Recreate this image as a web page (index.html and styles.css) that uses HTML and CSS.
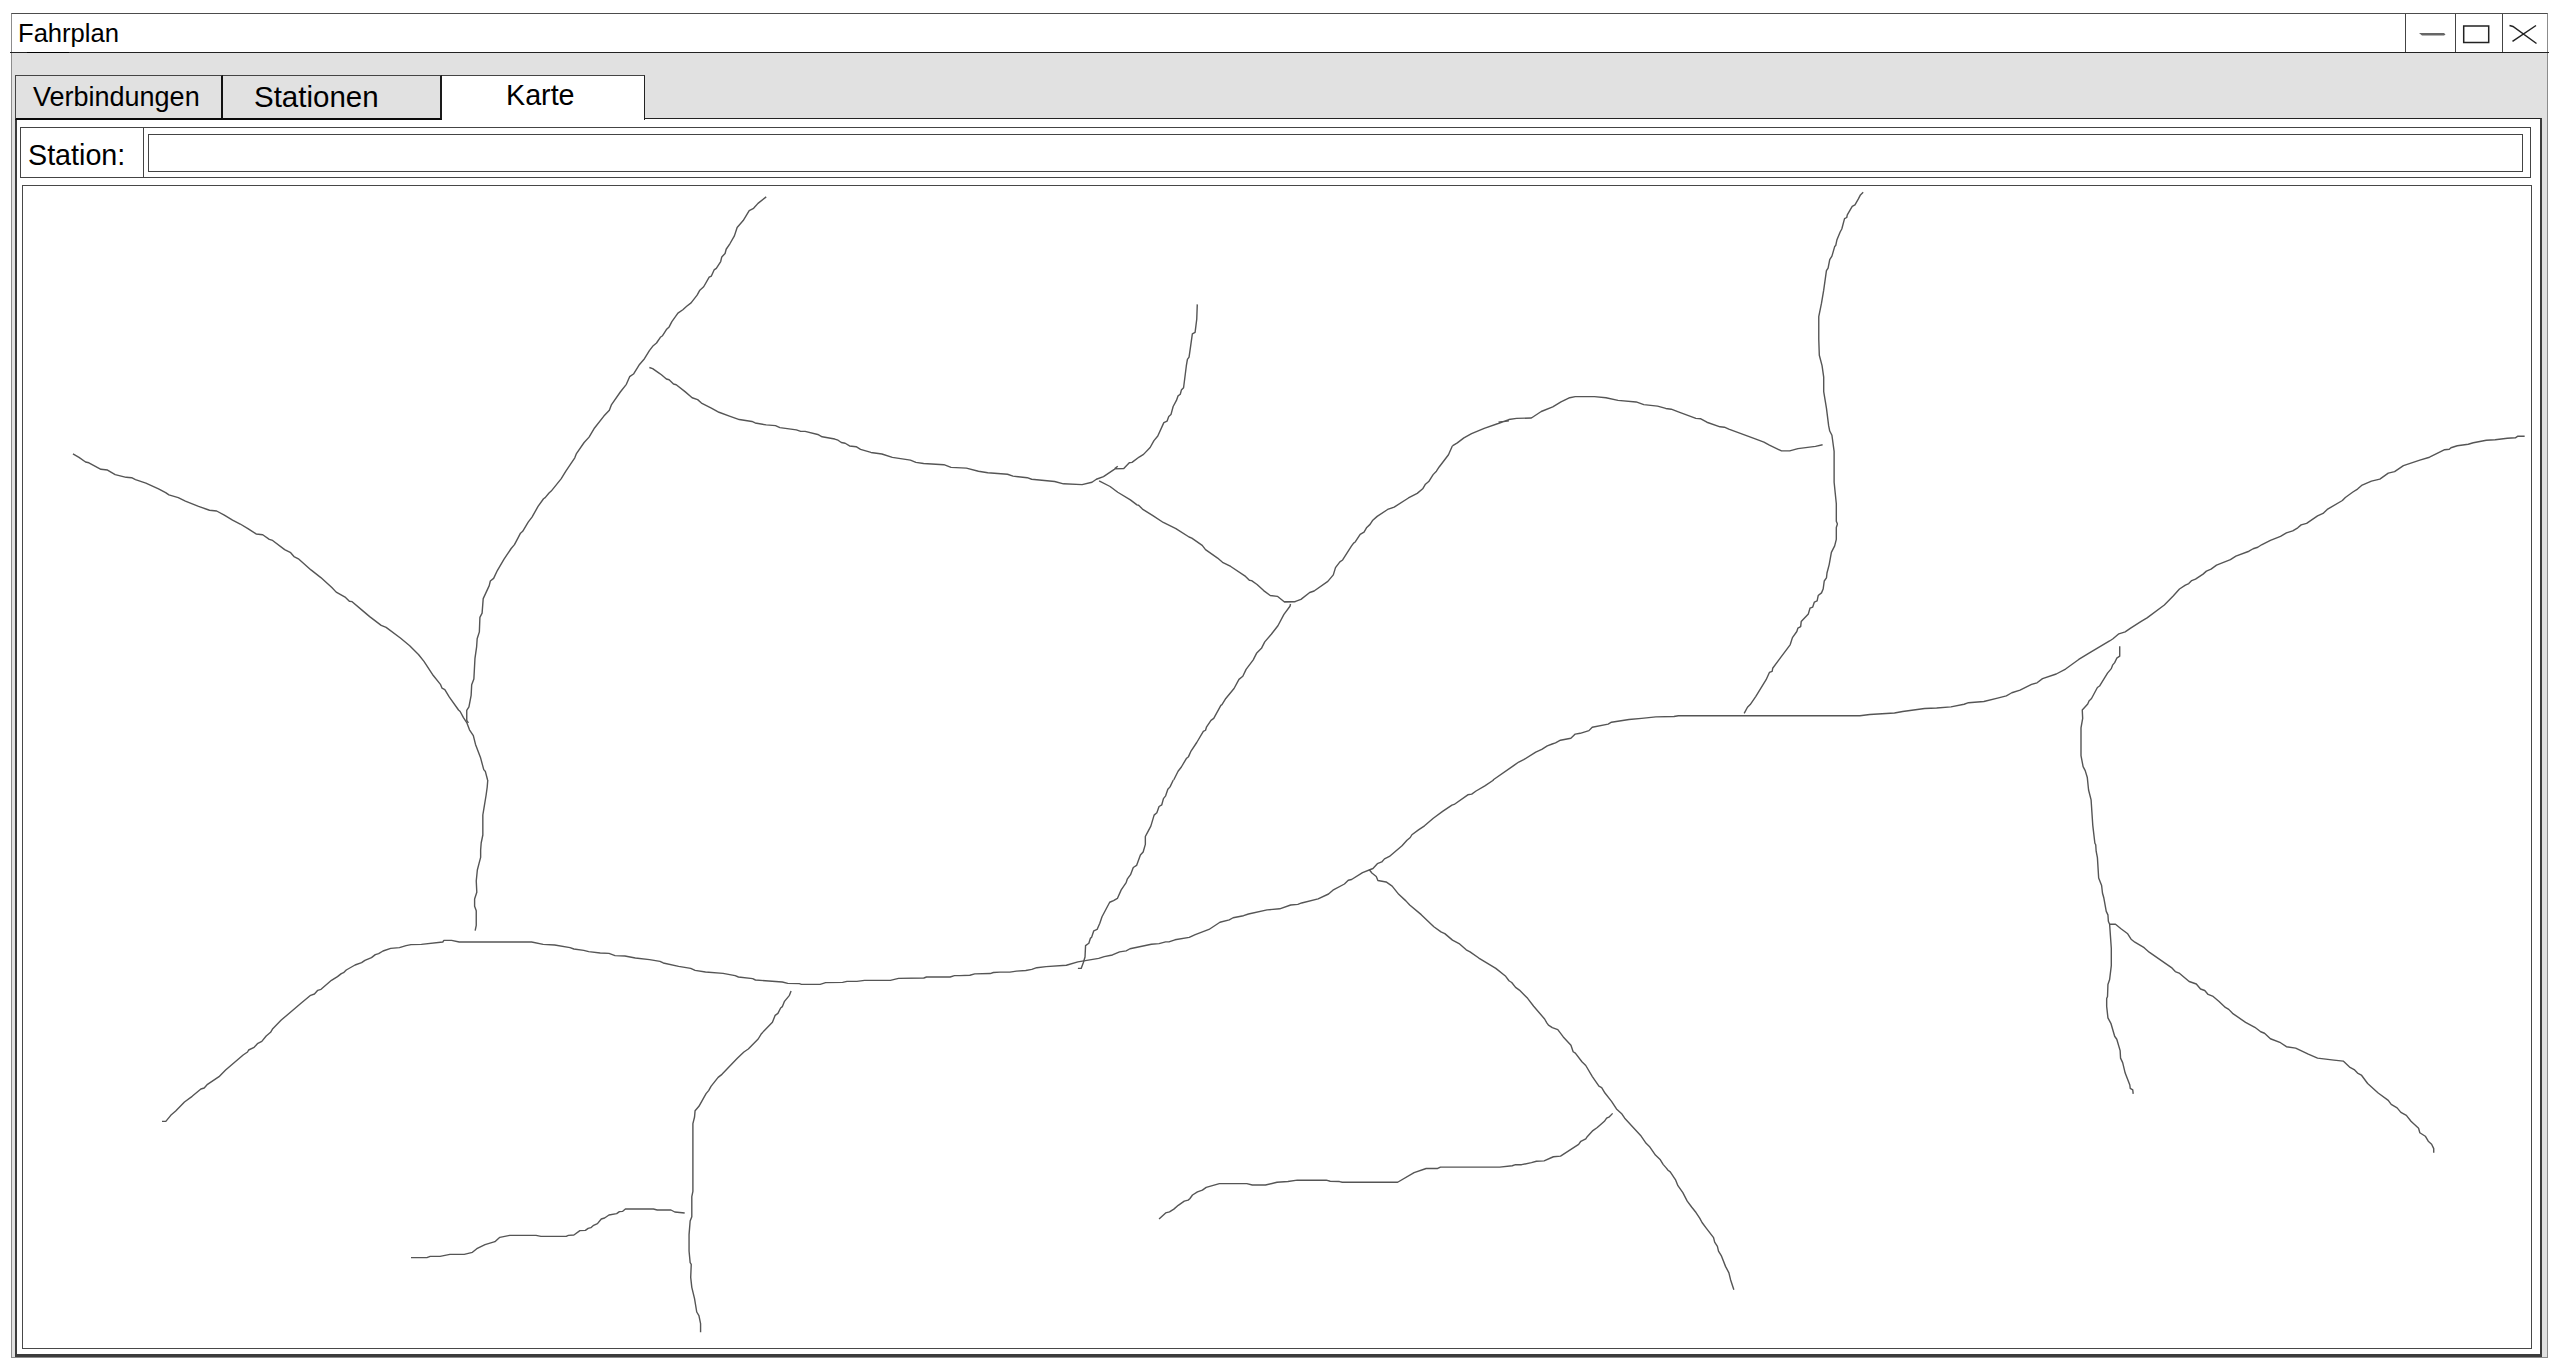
FILE: index.html
```html
<!DOCTYPE html>
<html lang="de">
<head>
<meta charset="utf-8">
<title>Fahrplan</title>
<link rel="stylesheet" href="styles.css">
</head>
<body>
<div class="window">
  <header class="titlebar">
    <h1 class="title">Fahrplan</h1>
    <button class="win-btn minimize" aria-label="Minimieren"><svg width="49" height="38"><path d="M13 19H38L39.500 20.500L38 21.500H16Z" fill="#666"/></svg></button>
    <button class="win-btn maximize" aria-label="Maximieren"><svg width="45" height="38"><rect x="7.700" y="12" width="25" height="16.500" fill="none" stroke="#222" stroke-width="1.500"/></svg></button>
    <button class="win-btn close" aria-label="Schließen"><svg width="44" height="38"><path d="M6.500 11.500L10 12.500L33.500 29.500M33 11.500L9.500 27.300" fill="none" stroke="#222" stroke-width="1.500"/></svg></button>
  </header>
  <nav class="tabs">
    <a class="tab connections">Verbindungen</a>
    <a class="tab stations">Stationen</a>
    <a class="tab map-tab active">Karte</a>
  </nav>
  <main class="panel">
    <div class="search">
      <label class="search-label" for="station">Station:</label>
      <input class="search-input" id="station" type="text">
    </div>
    <div class="map">
      <svg class="network" viewBox="23 186 2508 1162">
        <!-- north-west -->
        <g transform="translate(0 180) scale(.54847 .38265)">
          <path d="M133 716L144 725L156 737L162 739L184 756L196 758L210 770L230 777L240 778L247 783L266 792L289 807L302 817L308 823L325 830L338 839L362 853L382 863L395 865L409 876L424 889L438 899L452 911L467 925L479 927L491 939L497 942L519 966L530 974L536 984L544 990L567 1019L585 1039L605 1065L613 1077L630 1091L637 1101L642 1102L660 1124L674 1141L695 1164L704 1169L730 1197L747 1217L763 1240L773 1258L790 1295L803 1318L806 1328L811 1332L819 1351L836 1385L839 1389L845 1405L851 1418L856 1437L863 1452L867 1475L876 1509L882 1541L885 1546L889 1568"/>
          <path d="M1397 44L1382 61L1374 74L1366 80L1355 106L1344 124L1339 146L1331 166L1324 181L1322 192L1316 201L1314 213L1306 231L1302 235L1297 251L1293 254L1283 279L1276 288L1271 301L1260 321L1252 330L1245 339L1236 348L1225 370L1220 384L1215 391L1208 407L1204 411L1197 426L1191 433L1184 446L1175 467L1166 482L1155 507L1148 514L1142 534L1131 554L1115 587L1111 602L1101 617L1084 648L1074 672L1065 686L1051 715L1048 726L1032 760L1023 781L1005 813L1001 818L994 830L991 833L981 853L970 881L963 894L953 918L949 923L945 934L938 953L932 963L919 991L907 1020L900 1041L894 1048L892 1060L881 1094L879 1132L875 1143L874 1181L870 1199L869 1220L866 1250L864 1304L860 1319L859 1347L855 1377L851 1386L851 1412L854 1419"/>
        </g>
        <!-- north -->
        <g transform="translate(600 180) scale(.54847 .38265)">
          <path d="M90 490L96 493L107 504L112 509L121 520L126 522L134 533L139 535L155 553L168 569L178 574L185 583L203 596L217 607L236 617L254 626L277 631L283 635L303 640L320 642L328 647L358 653L366 657L374 657L397 665L405 671L428 677L434 680L440 686L447 688L455 695L467 697L475 704L494 712L514 716L533 725L566 732L576 738L590 741L627 744L640 751L668 753L690 761L707 765L743 769L753 774L779 778L787 782L829 788L845 794L879 796L897 790L905 782L918 775L939 755L955 754L965 739L970 738L983 724L991 717L1003 699L1010 681L1017 669L1028 634L1034 630L1037 618L1041 613L1045 592L1051 576L1054 564L1058 560L1060 549L1064 543L1069 486L1071 469L1074 463L1077 433L1080 402L1085 398L1088 364L1089 325M938 755L944 748"/>
          <path d="M910 786L930 801L944 816L967 836L979 849L982 850L989 860L1008 877L1027 895L1050 911L1074 933L1079 936L1098 955L1104 966L1126 988L1135 999L1150 1010L1177 1036L1184 1046L1188 1047L1198 1057L1210 1073L1222 1086L1235 1088L1248 1103L1267 1102L1278 1096L1294 1078L1302 1074L1327 1049L1337 1032L1341 1013L1349 998L1354 993L1370 957L1374 949L1377 946L1386 926L1393 920L1398 908L1404 900L1409 889L1417 879L1436 861L1448 855L1474 831L1490 819L1500 807L1505 795L1511 788L1519 770L1525 761L1530 750L1547 718L1554 695M1247 1102H1268"/>
          <path d="M1259 1108L1258 1114L1247 1135L1236 1165L1224 1187L1212 1207L1206 1224L1197 1237L1191 1254L1178 1279L1172 1297L1165 1305L1156 1329L1141 1355L1134 1371L1132 1373L1119 1407L1114 1412L1106 1429L1104 1438L1100 1441L1088 1470L1077 1494L1073 1507L1069 1512L1060 1534L1054 1545L1046 1568"/>
        </g>
        <!-- north-east -->
        <g transform="translate(1250 180) scale(.54847 .38265)">
          <path d="M369 695L378 687L390 674L404 663L427 649L455 635L472 626L486 623L513 622L531 605L552 593L567 580L583 569L593 566H628L649 569L671 576L704 580L718 587L743 591L758 597L768 599L781 606L813 623L822 624L833 633L857 645L865 646L873 651L920 676L937 685L947 693L969 708L984 708L999 702L1031 696L1044 692M453 633L472 629"/>
          <path d="M1118 32L1113 39L1109 50L1103 65L1098 69L1089 91L1088 98L1084 101L1079 128L1076 136L1070 157L1068 171L1066 174L1061 199L1057 208L1054 230L1051 237L1046 288L1042 322L1037 357V416L1038 458L1043 485L1046 515V553L1051 596L1055 642L1057 656L1061 667L1065 709V790L1069 846V892L1071 899L1069 908V939L1066 956L1060 973L1056 1005L1052 1027L1051 1040L1047 1048L1045 1069L1042 1079L1036 1086L1034 1100L1029 1103L1026 1116L1021 1119L1018 1134L1005 1154L1004 1167L999 1171L997 1180L989 1196L985 1214L981 1222L968 1247L953 1276L952 1284L947 1287L941 1306L922 1350L912 1371L907 1378L901 1394"/>
          <path d="M443 1568L480 1531L490 1521L499 1515L521 1495L532 1488L542 1479L551 1474L557 1471L566 1464L585 1459L593 1448L602 1446L618 1439L624 1430L653 1422L659 1417L691 1410L714 1407L740 1403L773 1402L781 1400H1112L1130 1397L1175 1393L1190 1389L1230 1381L1252 1380L1278 1377L1302 1370L1310 1366L1338 1363L1363 1354L1379 1348L1389 1340L1404 1333L1425 1318L1435 1314L1445 1303L1470 1291L1487 1278L1511 1253L1529 1237L1568 1204"/>
        </g>
        <!-- east -->
        <g transform="translate(1900 400) scale(.42092 .49745)">
          <path d="M499 484L506 480L520 470L535 466L547 459L573 445L587 438L628 412L649 394L664 380L678 372L686 369L693 363L702 360L720 350L728 344L739 340L752 332L785 321L798 314L829 304L839 299L850 296L859 291L880 282L904 274L918 267L933 263L945 257L953 251L966 248L992 233L1005 228L1015 220L1051 202L1058 196L1076 185L1087 179L1098 171L1120 163L1140 159L1160 147L1175 144L1196 132L1235 121L1258 115L1294 100L1305 99L1309 96L1324 92L1350 89L1362 86L1393 81L1414 80L1443 77L1462 76L1467 73H1484"/>
          <path d="M522 495V515L515 519L510 528L505 533L502 540L493 549L474 575L469 578L455 600L449 605L446 611L433 623L434 640L430 659V715L435 737L440 745L445 759L448 784L454 804L458 855L463 891L465 894L466 907L469 920L472 961L479 976L481 991L484 1000L490 1028L494 1035L495 1048L498 1054L502 1102V1137L498 1165L494 1175L493 1199L491 1203V1219L494 1242L501 1253L510 1279L515 1285L523 1308L524 1323L529 1332L535 1353L546 1377L547 1384L553 1387L554 1395"/>
          <path d="M498 1054H512L525 1063L541 1073L549 1084L558 1090L580 1101L592 1110L645 1141L654 1149L663 1152L687 1169L704 1174L714 1184L724 1187L732 1195L744 1199L758 1209L773 1221L781 1225L790 1233L821 1251L843 1261L857 1270L866 1273L880 1284L904 1292L918 1300L940 1303L970 1315L992 1323L1031 1327L1053 1329L1068 1341L1079 1346L1087 1353L1096 1357L1111 1374L1136 1393L1160 1408L1167 1416L1181 1423L1190 1432L1203 1438L1214 1450L1232 1464L1235 1473L1248 1480L1255 1490L1263 1496L1268 1505V1513"/>
        </g>
        <!-- south-west -->
        <g transform="translate(100 850) scale(.54847 .33333)">
          <path d="M707 -210L706 -189L704 -165L700 -125L698 -105V-45L695 -21L694 0V22L691 41L688 60L686 93L687 127L683 147V169L686 182V226L684 242"/>
          <path d="M113 814H120L129 796L138 783L154 756L168 739L184 717L190 714L196 703L217 680L229 660L261 615L269 606L271 600L281 592L287 581L295 574L303 558L311 547L315 536L330 511L344 491L367 459L384 436L391 432L397 421L403 418L422 391L433 380L440 371L444 368L449 360L465 345L477 338L483 331L495 323L502 314L508 311L516 303L530 295L546 293L558 287L567 284L586 283L625 276L627 271L641 271L655 276H787L808 283L829 285L857 293L864 297L882 301L891 305L912 309L928 310L939 317L957 318L976 324L1002 329L1021 334L1027 339L1055 349L1077 355L1085 361L1104 366L1136 370L1158 377L1164 381L1190 386L1195 390L1244 396L1254 400L1275 401L1279 403H1313L1323 398L1354 397L1362 394L1380 394L1394 391L1441 391L1456 385L1502 384L1507 381L1550 381L1558 377H1568"/>
          <path d="M1260 423L1257 436L1248 454L1244 470L1241 474L1236 490L1231 496L1226 517L1206 551L1200 567L1182 597L1174 606L1162 625L1134 673L1127 682L1114 709L1110 721L1105 731L1092 769L1085 782L1084 801L1081 821V1024L1079 1040L1079 1100L1076 1113L1074 1154V1203L1076 1238L1078 1243L1077 1282L1079 1312L1084 1346L1088 1386L1092 1397L1095 1421V1447"/>
          <path d="M567 1223H596L602 1219H620L638 1213L664 1213L679 1207L687 1196L702 1184L720 1175L729 1162L747 1156H795L804 1159H850L854 1156L864 1155L875 1142L885 1141L890 1135L895 1133L900 1126L907 1121L914 1107L920 1104L928 1095L942 1091L947 1085L953 1084L958 1077H1009L1016 1080L1041 1080L1048 1086L1066 1089"/>
        </g>
        <!-- south -->
        <g transform="translate(1000 780) scale(.54847 .34439)">
          <path d="M316 0L310 20L306 27L302 46L298 54L295 72L290 77L286 95L281 102L275 134L269 152L265 164V187L261 209L256 218L249 248L243 254L238 275L232 288L230 298L221 319L214 344L207 350L200 355L186 397L182 416L177 434L171 438L167 457L165 459L162 474L156 481L155 514L152 530L148 547H142"/>
          <path d="M-73 568L-55 567L-46 563L-18 562L-12 559L0 558H18L30 555L47 553L58 550L67 545L84 542L121 538L142 528L180 518L190 513L205 508L218 499L230 496L237 490L276 477L290 475L302 470H308L319 464L345 457L356 449L381 434L401 413L418 406L425 400L444 394L453 389L487 377L510 374L530 363L543 361L550 357L580 345L599 331L607 320L628 302L635 291L641 289L661 269L680 257L688 243L696 238L701 229L710 222L733 191L742 175L748 167L751 159L763 145L774 133L790 111L807 91L824 73L828 71L853 43L860 41L868 32L884 17L900 0"/>
          <path d="M673 260L678 270L686 280L689 292L704 296L715 308L727 332L740 351L747 363L768 391L791 426L804 441L811 446L825 465L837 475L850 493L857 499L873 517L904 547L922 570L928 583L933 588L940 602L947 610L962 634L973 657L993 694L997 705L1000 712L1007 719L1017 725L1027 746L1041 770L1045 789L1049 793L1061 818L1068 829L1080 861L1092 889L1097 893L1103 909L1115 933L1124 955L1134 970L1139 982L1168 1032L1178 1055L1184 1064L1195 1089L1204 1103L1209 1116L1215 1127L1218 1133L1222 1138L1232 1162L1236 1178L1245 1198L1253 1223L1261 1240L1269 1256L1276 1273L1280 1285L1288 1302L1301 1329L1303 1342L1308 1354L1310 1368L1315 1381L1323 1413L1329 1431L1332 1451L1338 1480"/>
          <path d="M1117 968L1111 978L1106 982L1102 991L1089 1009L1081 1018L1071 1035L1068 1042L1059 1049L1055 1058L1022 1092L1009 1094L992 1106L978 1107L969 1111L951 1117H940L934 1120L911 1124H803L798 1128H777L755 1140L725 1168H624L619 1166L602 1165L595 1162H542L525 1166L505 1168L484 1176H460L450 1172H400L376 1183L369 1191L360 1196L351 1205L346 1216L343 1220L336 1223L325 1235L317 1246L309 1254L302 1257L290 1275"/>
        </g>
      </svg>
    </div>
  </main>
</div>
</body>
</html>
```
FILE: styles.css
```css
* { box-sizing: border-box; }

body {
  margin: 0;
  padding: 13px 12px 10px 11px;
  height: 1368px;
  background: #fff;
  color: #000;
  font-family: "Liberation Sans", Arial, sans-serif;
  overflow: hidden;
}

.window {
  display: flex;
  flex-direction: column;
  height: 1345px;
  background: #e1e1e1;
  border: 1px solid #8c8c8c;
  border-top-color: #4c4c4c;
}

.titlebar {
  position: relative;
  display: flex;
  flex: 0 0 39px;
  margin: 0 -2px;
  padding: 0 2px;
  border-bottom: 1px solid #222;
  background: linear-gradient(#fff, #fff) content-box;
}

.titlebar::after {
  content: "";
  position: absolute;
  left: 17px;
  bottom: -1px;
  width: 42px;
  height: 1px;
  background: #000;
}

.title {
  flex: 1;
  margin: 0;
  padding: 5px 0 0 6px;
  font-size: 25.6px;
  font-weight: 400;
  line-height: 29px;
}

.win-btn {
  flex: none;
  padding: 0;
  border: 0;
  border-left: 1px solid #444;
  background: none;
}

.win-btn svg { display: block; }
.minimize { width: 50px; }
.maximize { width: 47px; }
.close { width: 45px; }

.tabs {
  position: relative;
  z-index: 1;
  display: flex;
  flex: none;
  height: 45px;
  margin: 22px 0 -2px 3px;
}

.tab {
  height: 45px;
  border-top: 1px solid #444;
  border-bottom: 2px solid #0a0a0a;
  line-height: 34px;
  white-space: nowrap;
}

.connections {
  width: 208px;
  padding: 4px 0 0 17px;
  border-left: 1px solid #444;
  border-right: 2px solid #111;
  font-size: 27px;
}

.stations {
  width: 219px;
  padding: 4px 0 0 31px;
  border-right: 2px solid #1a1a1a;
  font-size: 29.5px;
}

.map-tab {
  width: 203px;
  padding: 2px 0 0 64px;
  border-right: 1px solid #222;
  font-size: 28.7px;
}

.active {
  border-bottom: 0;
  background: #fff;
}

.panel {
  display: flex;
  flex: 1;
  flex-direction: column;
  gap: 7px;
  margin: 0 5px 0 3px;
  padding: 8px 8px 5px 3px;
  border: 2px solid #3c3c3c;
  border-top: 1px solid #222;
  border-bottom-width: 3px;
  background: #fff;
}

.search {
  display: flex;
  flex: 0 0 51px;
  margin: 0 1px 0 0;
  border: 1px solid #444;
}

.search-label {
  width: 123px;
  padding: 10px 0 0 7px;
  border-right: 1px solid #444;
  font-size: 28.7px;
  line-height: 34px;
}

.search-input {
  flex: 1;
  margin: 6px 7px 5px 4px;
  padding: 0 8px;
  border: 1px solid #444;
  background: #fff;
  font: inherit;
  font-size: 29px;
}

.map {
  flex: 1;
  margin-left: 2px;
  border: 1px solid #484848;
}

.network {
  display: block;
  width: 2508px;
  height: 1162px;
}

.network path {
  fill: none;
  stroke: #555;
  stroke-width: 1.4px;
  stroke-linejoin: round;
  vector-effect: non-scaling-stroke;
}
```
